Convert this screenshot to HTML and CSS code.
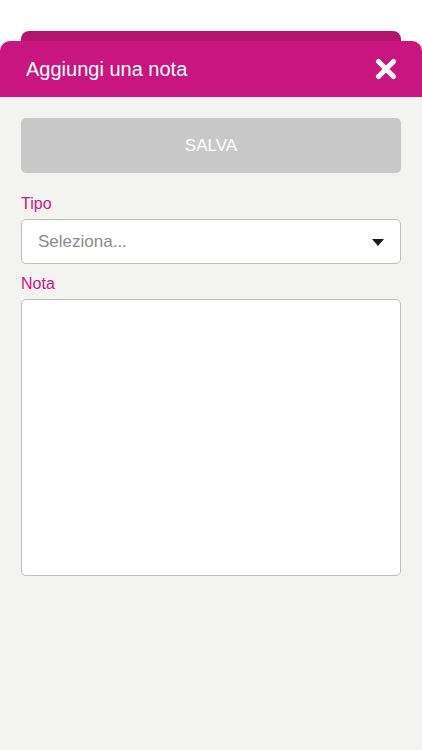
FILE: index.html
```html
<!DOCTYPE html>
<html lang="it">
<head>
	<meta charset="UTF-8">
	<title>Aggiungi una nota</title>
	<link rel="stylesheet" href="styles.css">
</head>
<body>
	<div class="sheet">
		<div class="sheet_back"></div>
		<div class="header">
			<p class="title">Aggiungi una nota</p>
			<a href="javascript:void(0)" class="close">
				<svg width="22" height="22" viewBox="0 0 22 22"><path d="M3.5 3.5 L18.5 18.5 M18.5 3.5 L3.5 18.5" stroke="#fff" stroke-width="5" stroke-linecap="round"/></svg>
			</a>
		</div>
		<div class="main">
			<button class="save_btn" disabled>SALVA</button>
			<p class="label label_tipo">Tipo</p>
			<div class="select">
				<span class="placeholder">Seleziona...</span>
				<span class="caret"></span>
			</div>
			<p class="label">Nota</p>
			<textarea class="note"></textarea>
		</div>
	</div>
</body>
</html>
```

FILE: styles.css
```css
html,body{margin: 0;padding: 0;background: #fff;height: 100%;}
body,p,button,textarea{font-family: "Liberation Sans", Arial, "Noto Sans", sans-serif;}
p{margin: 0;}

.sheet{padding-top: 31px;height: 719px;display: flex;flex-direction: column;}
.sheet_back{height: 10px;margin: 0 21px;background: #b0166e;border-radius: 8px 8px 0 0;}
.header{height: 56px;background: #c8157f;border-radius: 10px 10px 0 0;display: flex;align-items: center;justify-content: space-between;padding: 0 25px 0 26px;}
.title{color: #fff;font-size: 20px;padding-top: 1px;}
.close{display: block;width: 22px;height: 22px;}
.close svg{display: block;}

.main{flex: 1;background: #f3f3f2;padding: 21px 21px 0;display: flex;flex-direction: column;}
.save_btn{height: 55px;border: 0;border-radius: 5px;background: #c8c8c8;color: #fff;font-size: 17px;padding: 0;}
.label{color: #c8157f;font-size: 16px;line-height: 20px;margin: 0 0 5px;}
.label_tipo{margin-top: 21px;}
.select{height: 43px;border: 1px solid #bdbdbd;border-radius: 5px;background: #fff;display: flex;align-items: center;justify-content: space-between;padding: 0 16px;margin-bottom: 10px;}
.placeholder{color: #8a8a8a;font-size: 17px;}
.caret{width: 0;height: 0;border-left: 6px solid transparent;border-right: 6px solid transparent;border-top: 7px solid #1a1a1a;margin-top: 1px;}
.note{height: 277px;border: 1px solid #bdbdbd;border-radius: 5px;background: #fff;resize: none;padding: 8px;box-sizing: border-box;}
```
